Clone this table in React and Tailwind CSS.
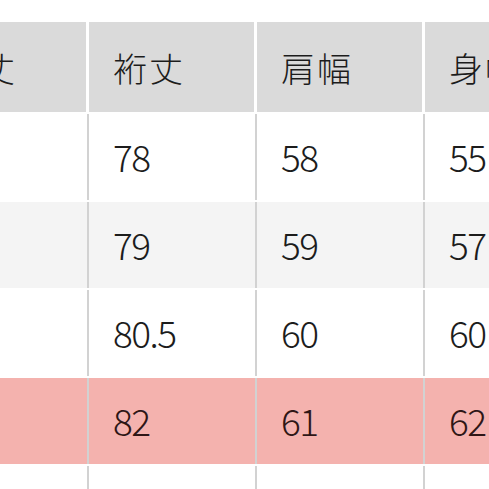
import React from "react";

const header = ["着丈", "裄丈", "肩幅", "身幅"];
const rows = [
  { vals: ["70", "78", "58", "55"], bg: "bg-white" },
  { vals: ["72", "79", "59", "57"], bg: "bg-[#f4f4f4]" },
  { vals: ["74", "80.5", "60", "60"], bg: "bg-white" },
  { vals: ["76", "82", "61", "62"], bg: "bg-[#f4b2ae]", pink: true },
  { vals: ["78", "84", "62", "64"], bg: "bg-white" },
];

const font = { fontFamily: '"Noto Sans CJK JP", "Noto Sans", sans-serif' };

export default function App() {
  return (
    <div className="w-[489px] h-[489px] overflow-hidden bg-white" style={font}>
      <div className="ml-[-79px] pt-[22px] flex flex-col w-[680px]">
        <div className="flex h-[90px] bg-white">
          {header.map((h, i) => (
            <React.Fragment key={h}>
              {i > 0 && <div className="w-[3px] shrink-0 bg-white" />}
              <div className="w-[165px] shrink-0 bg-[#dadada] flex items-center pl-[24px] text-[34px] tracking-[2px] text-[#1c1c1c] font-light">
                {h}
              </div>
            </React.Fragment>
          ))}
        </div>
        <div className="flex flex-col gap-[2px] pt-[2px]">
          {rows.map((r, ri) => (
            <div key={ri} className={`flex h-[86px] ${r.bg}`}>
              {r.vals.map((v, i) => (
                <React.Fragment key={i}>
                  {i > 0 && (
                    <div className="w-[3px] shrink-0 flex justify-center">
                      <div className="w-[2px] h-full bg-[#d2d2d2]" />
                    </div>
                  )}
                  <div
                    className={`w-[165px] shrink-0 flex items-center pl-[24px] text-[37px] font-light tracking-[-1.5px] ${
                      r.pink ? "text-[#2e1616]" : "text-[#1c1c1c]"
                    }`}
                  >
                    {v}
                  </div>
                </React.Fragment>
              ))}
            </div>
          ))}
        </div>
      </div>
    </div>
  );
}
